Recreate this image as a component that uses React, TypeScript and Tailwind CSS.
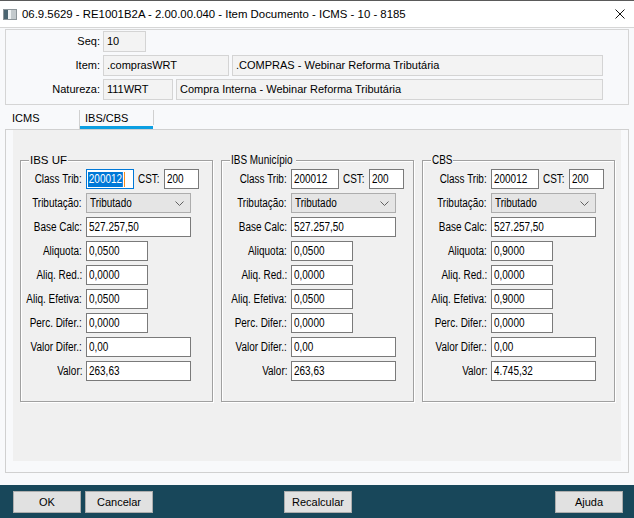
import React from "react";

const ui = "font-['Liberation_Sans','Arial',sans-serif]";
const sq = "inline-block shrink-0 whitespace-nowrap scale-x-[0.83]";

type GroupProps = {
  title: string;
  titleUi?: boolean;
  titleW: string;
  labelW: number;
  aliq: string;
  aliqEf: string;
  valor: string;
  focus?: boolean;
  width: string;
};

function Field({ w, value }: { w: string; value: string }) {
  return (
    <div className={`${w} flex h-[20px] items-center overflow-hidden border border-[#7a7a7a] bg-white pl-[2px] text-[12px] leading-[18px] text-black`}>
      <span className={`${sq} origin-left`}>{value}</span>
    </div>
  );
}

function Label({ t, w }: { t: string; w: number }) {
  return (
    <div style={{ width: w }} className="flex shrink-0 justify-end text-[12px] leading-[20px] text-black">
      <span className={`${sq} origin-right`}>{t}</span>
    </div>
  );
}

function Row({ children }: { children: React.ReactNode }) {
  return <div className="flex h-[20px] items-center gap-[4px]">{children}</div>;
}

function Group({ title, titleUi, titleW, labelW, aliq, aliqEf, valor, focus, width }: GroupProps) {
  return (
    <div className={`${width} relative h-[242px] shrink-0 border border-[#a0a0a0] pt-[8px] shadow-[inset_1px_1px_0_#ffffff,1px_1px_0_#ffffff] font-['Liberation_Sans','Arial',sans-serif]`}>
      <div className={`absolute left-[8px] top-[-9px] flex whitespace-nowrap ${titleW} bg-[#f0f0f0] px-[1px] leading-[16px] text-black ${titleUi ? "text-[11.5px]" : "text-[12px]"}`}>
        {titleUi ? <span>{title}</span> : <span className={`${sq} origin-left`}>{title}</span>}
      </div>
      <div className="flex flex-col gap-[4px]">
        <Row>
          <Label t="Class Trib:" w={labelW} />
          {focus ? (
            <div className="relative flex h-[20px] w-[48px] items-center border border-[#0078d7] bg-white pl-[1px] text-[12px]">
              <span className={`${sq} origin-left bg-[#0078d7] px-[1px] leading-[15px] text-white`}>200012</span>
              <span className="absolute left-[37px] top-[2px] h-[15px] w-[1px] bg-[#ff8c1a]" />
            </div>
          ) : (
            <Field w="w-[48px]" value="200012" />
          )}
          <div className="flex w-[23px] text-[12px] leading-[20px] text-black">
            <span className={`${sq} origin-left`}>CST:</span>
          </div>
          <div className="-ml-[1px]">
            <Field w="w-[35px]" value="200" />
          </div>
        </Row>
        <Row>
          <Label t="Tributação:" w={labelW} />
          <div className="flex h-[20px] w-[105px] items-center justify-between border border-[#adadad] bg-[#e5e5e5] pl-[3px] pr-[6px] text-[12px] text-black">
            <span className={`${sq} origin-left`}>Tributado</span>
            <svg width="9" height="5" viewBox="0 0 9 5">
              <polyline points="0.5,0.5 4.5,4.5 8.5,0.5" fill="none" stroke="#606060" strokeWidth="1" />
            </svg>
          </div>
        </Row>
        <Row>
          <Label t="Base Calc:" w={labelW} />
          <Field w="w-[105px]" value="527.257,50" />
        </Row>
        <Row>
          <Label t="Aliquota:" w={labelW} />
          <Field w="w-[62px]" value={aliq} />
        </Row>
        <Row>
          <Label t="Aliq. Red.:" w={labelW} />
          <Field w="w-[62px]" value="0,0000" />
        </Row>
        <Row>
          <Label t="Aliq. Efetiva:" w={labelW} />
          <Field w="w-[62px]" value={aliqEf} />
        </Row>
        <Row>
          <Label t="Perc. Difer.:" w={labelW} />
          <Field w="w-[62px]" value="0,0000" />
        </Row>
        <Row>
          <Label t="Valor Difer.:" w={labelW} />
          <Field w="w-[105px]" value="0,00" />
        </Row>
        <Row>
          <Label t="Valor:" w={labelW} />
          <Field w="w-[105px]" value={valor} />
        </Row>
      </div>
    </div>
  );
}

function TopInput({ w, value }: { w: string; value: string }) {
  return (
    <div className={`${w} h-[21px] shrink-0 whitespace-nowrap border border-[#d4d4d4] bg-[#f3f3f3] pl-[3px] text-[11px] leading-[19px] text-black`}>{value}</div>
  );
}

function Btn({ t }: { t: string }) {
  return (
    <div className={`flex h-[22px] w-[68px] items-center justify-center border border-[#adadad] bg-[#e1e1e1] text-[11px] text-black ${ui}`}>{t}</div>
  );
}

export default function App() {
  return (
    <div className={`flex h-[518px] w-[634px] flex-col overflow-hidden bg-[#f8f9fb] ${ui}`}>
      {/* title bar */}
      <div className="flex h-[28px] shrink-0 items-center border-t border-b border-t-[#5a5a5a] border-b-[#d6d6d6] bg-white">
        <svg className="ml-[3px]" width="14" height="11" viewBox="0 0 14 11">
          <rect x="0" y="0" width="14" height="11" fill="#8c9599" />
          <rect x="1" y="1" width="4" height="9" fill="#4a6470" />
          <rect x="5" y="1" width="3" height="9" fill="#eef2f3" />
          <rect x="8" y="1" width="5" height="9" fill="#c3cacd" />
        </svg>
        <div className="ml-[5px] text-[11.4px] leading-[16px] text-black">
          06.9.5629 - RE1001B2A - 2.00.00.040 - Item Documento - ICMS - 10 - 8185
        </div>
        <svg className="ml-auto mr-[9px]" width="10" height="10" viewBox="0 0 10 10">
          <path d="M0.5 0.5 L9.5 9.5 M9.5 0.5 L0.5 9.5" stroke="#111" strokeWidth="1" />
        </svg>
      </div>

      {/* top box */}
      <div className="mx-[5px] mt-[1px] flex h-[76px] shrink-0 flex-col gap-[3px] border border-[#d5d5d5] pt-[1px]">
        <div className="flex items-center gap-[3px]">
          <div className="w-[94px] text-right text-[11px] leading-[21px] text-black">Seq:</div>
          <TopInput w="w-[43px]" value="10" />
        </div>
        <div className="flex items-center gap-[3px]">
          <div className="w-[94px] text-right text-[11px] leading-[21px] text-black">Item:</div>
          <TopInput w="w-[126px]" value=".comprasWRT" />
          <TopInput w="w-[371px]" value=".COMPRAS - Webinar Reforma Tributária" />
        </div>
        <div className="flex items-center gap-[3px]">
          <div className="w-[94px] text-right text-[11px] leading-[21px] text-black">Natureza:</div>
          <TopInput w="w-[70px]" value="111WRT" />
          <TopInput w="w-[427px]" value="Compra Interna - Webinar Reforma Tributária" />
        </div>
      </div>

      {/* tabs */}
      <div className="flex h-[24px] shrink-0 pl-[5px]">
        <div className="w-[74px] pl-[7px] pt-[6px] text-[11px] leading-[15px] text-black">ICMS</div>
        <div className="mt-[5px] h-[19px] w-[1px] bg-[#d0d0d0]" />
        <div className="w-[73px] border-b-[3px] border-[#0c9fe2] pl-[5px] pt-[6px] text-[11px] leading-[15px] text-black">IBS/CBS</div>
        <div className="mt-[5px] h-[15px] w-[1px] bg-[#d0d0d0]" />
      </div>

      {/* tab content */}
      <div className="mx-[5px] h-[344px] shrink-0 border border-[#d0d0d0] px-[7px] pb-[11px]">
        <div className="flex h-[331px] gap-[8px] bg-[#f0f0f0] pl-[7px] pt-[30px]">
          <Group width="w-[193px]" title="IBS UF" titleUi titleW="w-auto" labelW={61} aliq="0,0500" aliqEf="0,0500" valor="263,63" focus />
          <Group width="w-[193px]" title="IBS Município" titleW="w-[66px]" labelW={65} aliq="0,0500" aliqEf="0,0500" valor="263,63" />
          <Group width="w-[193px]" title="CBS" titleW="w-[22px]" labelW={64} aliq="0,9000" aliqEf="0,9000" valor="4.745,32" />
        </div>
      </div>

      <div className="flex-1" />

      {/* bottom bar */}
      <div className="grid h-[33px] shrink-0 grid-cols-3 items-start bg-[#18475a] pl-[13px] pr-[11px] pt-[6px]">
        <div className="flex gap-[4px]">
          <Btn t="OK" />
          <Btn t="Cancelar" />
        </div>
        <div className="flex justify-center">
          <Btn t="Recalcular" />
        </div>
        <div className="flex justify-end">
          <Btn t="Ajuda" />
        </div>
      </div>
    </div>
  );
}
